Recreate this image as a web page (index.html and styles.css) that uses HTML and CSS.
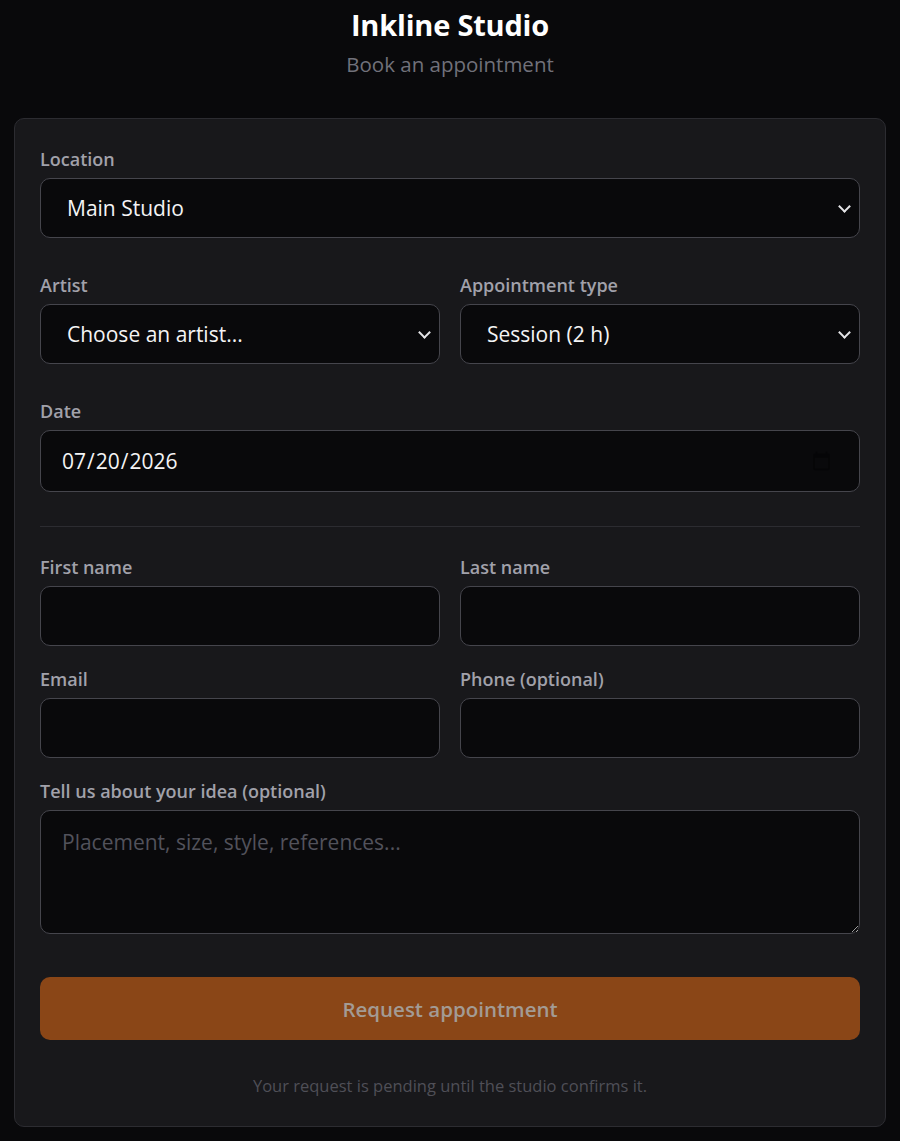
FILE: index.html
```html
<!DOCTYPE html>
<html lang="en">
<head>
<meta charset="utf-8">
<title>Inkline Studio</title>
<link rel="stylesheet" href="styles.css">
</head>
<body>
<div class="page">
  <header class="head">
    <h1 class="title">Inkline Studio</h1>
    <p class="subtitle">Book an appointment</p>
  </header>
  <form class="card">
    <div class="field">
      <label class="label">Location</label>
      <div class="select-wrap">
        <select class="control select"><option>Main Studio</option></select>
      </div>
    </div>
    <div class="row">
      <div class="field">
        <label class="label">Artist</label>
        <div class="select-wrap">
          <select class="control select"><option>Choose an artist...</option></select>
        </div>
      </div>
      <div class="field">
        <label class="label">Appointment type</label>
        <div class="select-wrap">
          <select class="control select"><option>Session (2 h)</option></select>
        </div>
      </div>
    </div>
    <div class="field">
      <label class="label">Date</label>
      <input class="control date" type="date" value="2026-07-20">
    </div>
    <hr class="divider">
    <div class="contact">
      <div class="row">
        <div class="field">
          <label class="label">First name</label>
          <input class="control" type="text">
        </div>
        <div class="field">
          <label class="label">Last name</label>
          <input class="control" type="text">
        </div>
      </div>
      <div class="row">
        <div class="field">
          <label class="label">Email</label>
          <input class="control" type="email">
        </div>
        <div class="field">
          <label class="label">Phone (optional)</label>
          <input class="control" type="tel">
        </div>
      </div>
      <div class="field">
        <label class="label">Tell us about your idea (optional)</label>
        <textarea class="control area" placeholder="Placement, size, style, references..."></textarea>
      </div>
    </div>
    <button class="submit" type="button" disabled>Request appointment</button>
    <p class="note">Your request is pending until the studio confirms it.</p>
  </form>
</div>
</body>
</html>
```
FILE: styles.css
```css
* { box-sizing: border-box; }
html, body { margin: 0; background: #09090b; }
body {
  font-family: "Open Sans", "Noto Sans", "DejaVu Sans", sans-serif;
  color: #e4e4e7;
}
.page { padding: 0 14px 15px; }
.head { text-align: center; padding-top: 6px; }
.title {
  margin: 0;
  font-size: 29px;
  line-height: 38px;
  font-weight: 700;
  color: #ffffff;
  letter-spacing: -0.2px;
}
.subtitle {
  margin: 7px 0 0;
  font-size: 20.5px;
  line-height: 26px;
  color: #71717a;
}
.card {
  margin-top: 41px;
  background: #18181b;
  border: 1px solid #2c2c31;
  border-radius: 10px;
  padding: 29px 25px 29px;
  display: flex;
  flex-direction: column;
}
.field { display: flex; flex-direction: column; min-width: 0; }
.row {
  display: grid;
  grid-template-columns: 1fr 1fr;
  gap: 20px;
}
.card > .field, .card > .row { margin-bottom: 36px; }
.label {
  font-size: 18px;
  line-height: 22px;
  font-weight: 600;
  color: #a1a1aa;
  margin-bottom: 8px;
}
.control {
  width: 100%;
  height: 60px;
  background: #09090b;
  border: 1px solid #45454c;
  border-radius: 10px;
  color: #f4f4f5;
  font-family: inherit;
  font-size: 21px;
  padding: 0 21px;
  outline: none;
}
.select-wrap { position: relative; }
.select-wrap::after {
  content: "";
  position: absolute;
  right: 11px;
  top: 24px;
  width: 7px;
  height: 7px;
  border-right: 2px solid #e4e4e7;
  border-bottom: 2px solid #e4e4e7;
  transform: rotate(45deg);
  pointer-events: none;
}
.select {
  appearance: none;
  -webkit-appearance: none;
  padding-left: 26px;
}
.date { height: 62px; color-scheme: light; color: #f4f4f5; padding-left: 20px; }
.date::-webkit-calendar-picker-indicator { opacity: 0.35; margin-right: 4px; }
.divider {
  border: 0;
  border-top: 1px solid #2c2c31;
  margin: -2px 0 29px;
  width: 100%;
}
.contact { display: flex; flex-direction: column; gap: 22px; margin-bottom: 43px; }
.area {
  height: 124px;
  padding-top: 17px;
  resize: vertical;
  display: block;
}
.area::placeholder { color: #52525b; }
.submit {
  height: 63px;
  border: 0;
  border-radius: 10px;
  background: #8a4617;
  color: #a39b94;
  font-family: inherit;
  font-size: 20.5px;
  font-weight: 600;
}
.note {
  margin: 35px 0 0;
  text-align: center;
  font-size: 16.5px;
  line-height: 22px;
  color: #4f4f57;
}
```
